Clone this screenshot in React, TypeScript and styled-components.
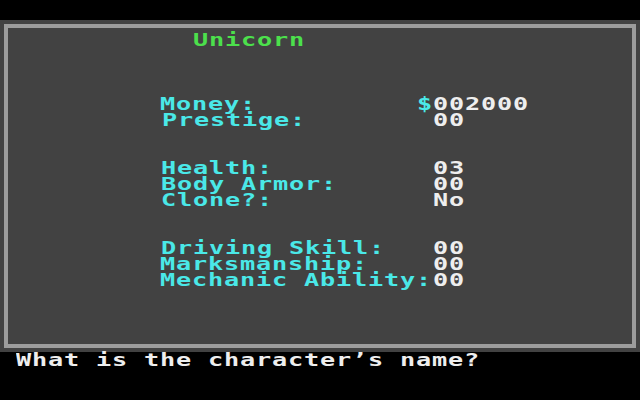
import React from "react";
import styled, { createGlobalStyle } from "styled-components";

const Global = createGlobalStyle`
  html, body { margin: 0; padding: 0; background: #000; }
  #root { width: 640px; height: 400px; }
`;

const Screen = styled.div`
  width: 640px;
  height: 400px;
  background: #000;
  display: flex;
  flex-direction: column;
  overflow: hidden;
`;

const TopBand = styled.div`
  height: 20px;
  flex: none;
`;

const Frame = styled.div`
  height: 332px;
  flex: none;
  box-sizing: border-box;
  padding: 4px;
  background: #424242;
  display: flex;
`;

const Panel = styled.div`
  flex: 1;
  box-sizing: border-box;
  border: 4px solid #9c9c9c;
  background: #424242;
  padding-top: 4px;
  display: flex;
  flex-direction: column;
`;

const Line = styled.div<{ $col: number }>`
  height: 16px;
  flex: none;
  display: grid;
  grid-template-columns: 256px 16px auto;
  padding-left: ${(p) => p.$col * 16 - 8}px;
`;

const TitleLine = styled.div<{ $col: number }>`
  height: 16px;
  flex: none;
  display: flex;
  padding-left: ${(p) => p.$col * 16 - 8}px;
`;

const Gap = styled.div<{ $rows: number }>`
  height: ${(p) => p.$rows * 16}px;
  flex: none;
`;

const Glyphs = styled.span<{ $color: string; $nudge?: number }>`
  display: inline-block;
  font-family: "DejaVu Sans Mono", "Liberation Mono", monospace;
  font-weight: bold;
  font-size: 18px;
  line-height: 16px;
  letter-spacing: 0.59px;
  white-space: pre;
  color: ${(p) => p.$color};
  transform: scaleX(1.4);
  transform-origin: left center;
  margin-left: ${(p) => p.$nudge ?? 0}px;
`;

const Cell = styled.div`
  display: flex;
`;

const Prompt = styled.div`
  height: 16px;
  padding-left: 16px;
  display: flex;
`;

const CYAN = "#4ae8e8";
const WHITE = "#eeeeee";
const GREEN = "#4ce04c";

type Stat = { label: string; value: string; nudge?: number; dollar?: boolean };

const StatRow = ({ label, value, nudge, dollar }: Stat) => (
  <Line $col={10}>
    <Cell>
      <Glyphs $color={CYAN} $nudge={nudge}>{label}</Glyphs>
    </Cell>
    <Cell>{dollar && <Glyphs $color={CYAN} $nudge={1}>$</Glyphs>}</Cell>
    <Cell>
      <Glyphs $color={WHITE} $nudge={1}>{value}</Glyphs>
    </Cell>
  </Line>
);

export default function App() {
  return (
    <Screen>
      <Global />
      <TopBand />
      <Frame>
        <Panel>
          <TitleLine $col={12}>
            <Glyphs $color={GREEN} $nudge={1}>Unicorn</Glyphs>
          </TitleLine>
          <Gap $rows={3} />
          <StatRow label="Money:" value="002000" dollar />
          <StatRow label="Prestige:" value="00" nudge={2} />
          <Gap $rows={2} />
          <StatRow label="Health:" value="03" nudge={1} />
          <StatRow label="Body Armor:" value="00" nudge={1} />
          <StatRow label="Clone?:" value="No" nudge={1} />
          <Gap $rows={2} />
          <StatRow label="Driving Skill:" value="00" nudge={1} />
          <StatRow label="Marksmanship:" value="00" />
          <StatRow label="Mechanic Ability:" value="00" />
        </Panel>
      </Frame>
      <Prompt>
        <Glyphs $color={WHITE}>What is the character’s name?</Glyphs>
      </Prompt>
    </Screen>
  );
}
